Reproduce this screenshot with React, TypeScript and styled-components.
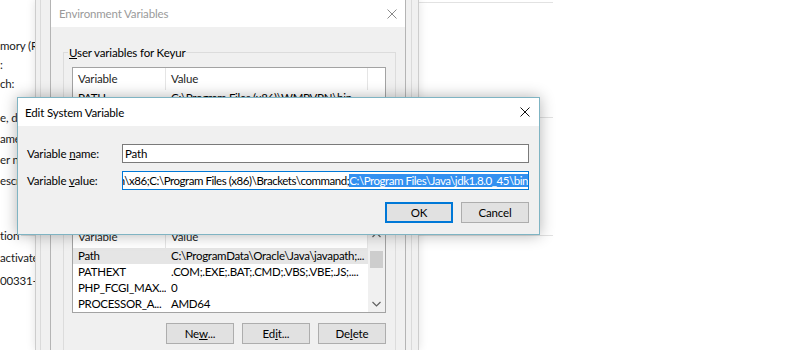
import React from "react";
import styled, { createGlobalStyle } from "styled-components";

const GlobalStyle = createGlobalStyle`
  html, body {
    margin: 0;
    padding: 0;
    background: #fff;
  }
  body {
    font-family: "Segoe UI", Lato, "Noto Sans", sans-serif;
    font-size: 11.5px;
    letter-spacing: -0.15px;
    color: #000;
  }
`;

const Desktop = styled.div`
  position: relative;
  width: 804px;
  height: 350px;
  overflow: hidden;
  background: #fff;
`;

/* ---- control panel "System" page, mostly hidden behind the dialogs ---- */

const SystemPage = styled.div`
  position: absolute;
  left: 0;
  top: 0;
  width: 553px;
  height: 350px;
  background: #fff;
  display: flex;
  flex-direction: column;
  color: #1a1a1a;
`;

const Section = styled.div<{ $gap: number }>`
  display: flex;
  flex-direction: column;
  margin-top: ${p => p.$gap}px;
`;

const SectionHead = styled.div`
  display: flex;
  align-items: center;
  height: 14px;
  white-space: nowrap;
`;

const Rule = styled.div<{ $from: number }>`
  flex: 1;
  height: 1px;
  background: #e2e2e2;
  margin-left: ${p => p.$from}px;
`;

const InfoRows = styled.div<{ $lead: number; $row: number }>`
  margin-top: ${p => p.$lead}px;
  display: flex;
  flex-direction: column;

  & > span {
    height: ${p => p.$row}px;
    line-height: ${p => p.$row}px;
    white-space: nowrap;
  }
`;

/* ---- System Properties dialog frame ---- */

const PropsWindow = styled.div`
  position: absolute;
  left: 35px;
  top: 0;
  width: 384px;
  height: 350px;
  box-sizing: border-box;
  background: #f0f0f0;
  border-left: 1px solid #cdcdcd;
  border-right: 1px solid #cdcdcd;
  box-shadow: 0 0 9px rgba(0, 0, 0, 0.12);
  display: flex;
`;

const TabPage = styled.div`
  flex: 1;
  margin: 0 6px 0 4px;
  border-left: 1px solid #dadada;
  border-right: 1px solid #dadada;
`;

/* ---- generic window parts ---- */

const TitleBar = styled.div<{ $active?: boolean; $h: number; $pl: number; $pr: number }>`
  height: ${p => p.$h}px;
  flex-shrink: 0;
  background: #fff;
  display: flex;
  align-items: center;
  justify-content: space-between;
  padding: 0 ${p => p.$pr}px 0 ${p => p.$pl}px;
  color: ${p => (p.$active ? "#000" : "#9a9a9a")};
  white-space: nowrap;
`;

const CloseGlyph = ({ color }: { color: string }) => (
  <svg width="10" height="10" viewBox="0 0 10 10">
    <path d="M0.5 0.5 L9.5 9.5 M9.5 0.5 L0.5 9.5" stroke={color} strokeWidth="1" fill="none" />
  </svg>
);

const Mnemonic = styled.span`
  text-decoration: underline;
  text-underline-offset: 1px;
`;

const Button = styled.button<{ $default?: boolean }>`
  width: 68px;
  height: 21px;
  padding: 0;
  margin: 0;
  font: inherit;
  letter-spacing: inherit;
  color: #000;
  background: #e1e1e1;
  border: 1px solid ${p => (p.$default ? "#0078d7" : "#adadad")};
  box-shadow: ${p => (p.$default ? "inset 0 0 0 1px #0078d7" : "none")};
`;

const ButtonRow = styled.div<{ $top: number }>`
  display: flex;
  justify-content: flex-end;
  gap: 8px;
  margin-top: ${p => p.$top}px;
`;

/* ---- Environment Variables window ---- */

const EnvWindow = styled.div`
  position: absolute;
  left: 50px;
  top: 0;
  width: 356px;
  height: 370px;
  box-sizing: border-box;
  background: #f0f0f0;
  border: 1px solid #b4b4b4;
  border-top: none;
  display: flex;
  flex-direction: column;
`;

const EnvBody = styled.div`
  padding: 18px 9px 0 12px;
  display: flex;
  flex-direction: column;
  gap: 8px;
`;

const Group = styled.fieldset<{ $pb: number }>`
  margin: 0;
  padding: 7px 9px ${p => p.$pb}px 8px;
  border: 1px solid #dcdcdc;
  min-width: 0;
  display: flex;
  flex-direction: column;
`;

const GroupLabel = styled.legend`
  padding: 0 1px;
  margin-left: -4px;
  line-height: 15px;
  background: #f0f0f0;
`;

const ListView = styled.div<{ $h: number }>`
  height: ${p => p.$h}px;
  box-sizing: border-box;
  border: 1px solid #a3a3a3;
  background: #fff;
  display: flex;
  overflow: hidden;
`;

const ListBody = styled.div`
  flex: 1;
  display: flex;
  flex-direction: column;
`;

const ListHeader = styled.div`
  display: grid;
  grid-template-columns: 93px 202px;
  height: 22px;
  flex-shrink: 0;
`;

const HeaderCell = styled.div`
  padding-left: 5px;
  line-height: 22px;
  border-right: 1px solid #e5e5e5;
  color: #1e1e1e;
`;

const ListRow = styled.div<{ $selected?: boolean }>`
  display: grid;
  grid-template-columns: 93px 202px;
  height: 16px;
  line-height: 16px;
  white-space: nowrap;
  letter-spacing: -0.3px;
  background: ${p => (p.$selected ? "#e5e5e5" : "transparent")};

  & > span {
    padding-left: 5px;
    overflow: hidden;
  }
`;

const ScrollBar = styled.div`
  width: 17px;
  flex-shrink: 0;
  background: #f0f0f0;
  display: flex;
  flex-direction: column;
  align-items: center;
`;

const ScrollArrow = styled.div`
  height: 17px;
  width: 17px;
  display: flex;
  align-items: center;
  justify-content: center;
`;

const ScrollTrack = styled.div`
  flex: 1;
  width: 13px;
`;

const ScrollThumb = styled.div`
  margin-top: 8px;
  height: 17px;
  background: #cdcdcd;
`;

const Chevron = ({ up }: { up?: boolean }) => (
  <svg width="9" height="6" viewBox="0 0 9 6">
    <path
      d={up ? "M0.5 5 L4.5 1 L8.5 5" : "M0.5 1 L4.5 5 L8.5 1"}
      stroke="#606060"
      strokeWidth="1.2"
      fill="none"
    />
  </svg>
);

/* ---- Edit System Variable dialog ---- */

const Dialog = styled.div`
  position: absolute;
  left: 17px;
  top: 97px;
  width: 523px;
  height: 138px;
  box-sizing: border-box;
  background: #f0f0f0;
  border: 1px solid #7fb4c3;
  box-shadow: 0 0 14px rgba(0, 0, 0, 0.3);
  display: flex;
  flex-direction: column;
`;

const DialogBody = styled.div`
  padding: 18px 10px 0 9px;
  display: flex;
  flex-direction: column;
`;

const FieldGrid = styled.div`
  display: grid;
  grid-template-columns: 95px 1fr;
  grid-auto-rows: 19px;
  row-gap: 8px;
  align-items: center;
`;

const TextField = styled.div<{ $focused?: boolean }>`
  height: 19px;
  box-sizing: border-box;
  background: #fff;
  border: 1px solid ${p => (p.$focused ? "#0078d7" : "#7a7a7a")};
  display: flex;
  align-items: center;
  justify-content: ${p => (p.$focused ? "flex-end" : "flex-start")};
  padding: 0 ${p => (p.$focused ? "0" : "2px")};
  overflow: hidden;
  white-space: nowrap;
  letter-spacing: ${p => (p.$focused ? "-0.45px" : "inherit")};
`;

const Selected = styled.span`
  background: #3390f0;
  color: #fff;
`;

const sections = [
  { gap: -5, title: "", from: 40, lead: 8, row: 19, rows: ["", "mory (RA", ":", "ch:"] },
  { gap: 17, title: "e, d", from: 6, lead: 4, row: 21, rows: ["ame:", "er na", "escri", ""] },
  { gap: 16, title: "tion", from: 2, lead: 4, row: 23, rows: ["activated", "00331-20"] },
];

const systemVars = [
  { name: "Path", value: "C:\\ProgramData\\Oracle\\Java\\javapath;..." },
  { name: "PATHEXT", value: ".COM;.EXE;.BAT;.CMD;.VBS;.VBE;.JS;...." },
  { name: "PHP_FCGI_MAX...", value: "0" },
  { name: "PROCESSOR_A...", value: "AMD64" },
];

const userVars = [{ name: "PATH", value: "C:\\Program Files (x86)\\WMPVPN\\bin" }];

const VALUE_BEFORE = "in\\x86;C:\\Program Files (x86)\\Brackets\\command;";
const VALUE_SELECTED = "C:\\Program Files\\Java\\jdk1.8.0_45\\bin";

const App = () => {
  return (
    <Desktop>
      <GlobalStyle />

      <SystemPage>
        {sections.map((s, i) => (
          <Section key={i} $gap={s.gap}>
            <SectionHead>
              {s.title}
              <Rule $from={s.from} />
            </SectionHead>
            <InfoRows $lead={s.lead} $row={s.row}>
              {s.rows.map((r, j) => (
                <span key={j}>{r}</span>
              ))}
            </InfoRows>
          </Section>
        ))}
      </SystemPage>

      <PropsWindow>
        <TabPage />
      </PropsWindow>

      <EnvWindow>
        <TitleBar $h={27} $pl={8} $pr={8}>
          Environment Variables
          <CloseGlyph color="#8a8a8a" />
        </TitleBar>
        <EnvBody>
          <Group $pb={40}>
            <GroupLabel>
              <Mnemonic>U</Mnemonic>ser variables for Keyur
            </GroupLabel>
            <ListView $h={87}>
              <ListBody>
                <ListHeader>
                  <HeaderCell>Variable</HeaderCell>
                  <HeaderCell>Value</HeaderCell>
                </ListHeader>
                {userVars.map(v => (
                  <ListRow key={v.name}>
                    <span>{v.name}</span>
                    <span>{v.value}</span>
                  </ListRow>
                ))}
              </ListBody>
            </ListView>
          </Group>

          <Group $pb={10}>
            <GroupLabel>
              <Mnemonic>S</Mnemonic>ystem variables
            </GroupLabel>
            <ListView $h={88}>
              <ListBody>
                <ListHeader>
                  <HeaderCell>Variable</HeaderCell>
                  <HeaderCell>Value</HeaderCell>
                </ListHeader>
                {systemVars.map((v, i) => (
                  <ListRow key={v.name} $selected={i === 0}>
                    <span>{v.name}</span>
                    <span>{v.value}</span>
                  </ListRow>
                ))}
              </ListBody>
              <ScrollBar>
                <ScrollArrow>
                  <Chevron up />
                </ScrollArrow>
                <ScrollTrack>
                  <ScrollThumb />
                </ScrollTrack>
                <ScrollArrow>
                  <Chevron />
                </ScrollArrow>
              </ScrollBar>
            </ListView>
            <ButtonRow $top={10}>
              <Button>
                Ne<Mnemonic>w</Mnemonic>...
              </Button>
              <Button>
                Ed<Mnemonic>i</Mnemonic>t...
              </Button>
              <Button>
                De<Mnemonic>l</Mnemonic>ete
              </Button>
            </ButtonRow>
          </Group>
        </EnvBody>
      </EnvWindow>

      <Dialog>
        <TitleBar $active $h={28} $pl={7} $pr={9}>
          Edit System Variable
          <CloseGlyph color="#111" />
        </TitleBar>
        <DialogBody>
          <FieldGrid>
            <span>
              Variable <Mnemonic>n</Mnemonic>ame:
            </span>
            <TextField>Path</TextField>
            <span>
              Variable <Mnemonic>v</Mnemonic>alue:
            </span>
            <TextField $focused>
              {VALUE_BEFORE}
              <Selected>{VALUE_SELECTED}</Selected>
            </TextField>
          </FieldGrid>
          <ButtonRow $top={12}>
            <Button $default>OK</Button>
            <Button>Cancel</Button>
          </ButtonRow>
        </DialogBody>
      </Dialog>
    </Desktop>
  );
};

export default App;
